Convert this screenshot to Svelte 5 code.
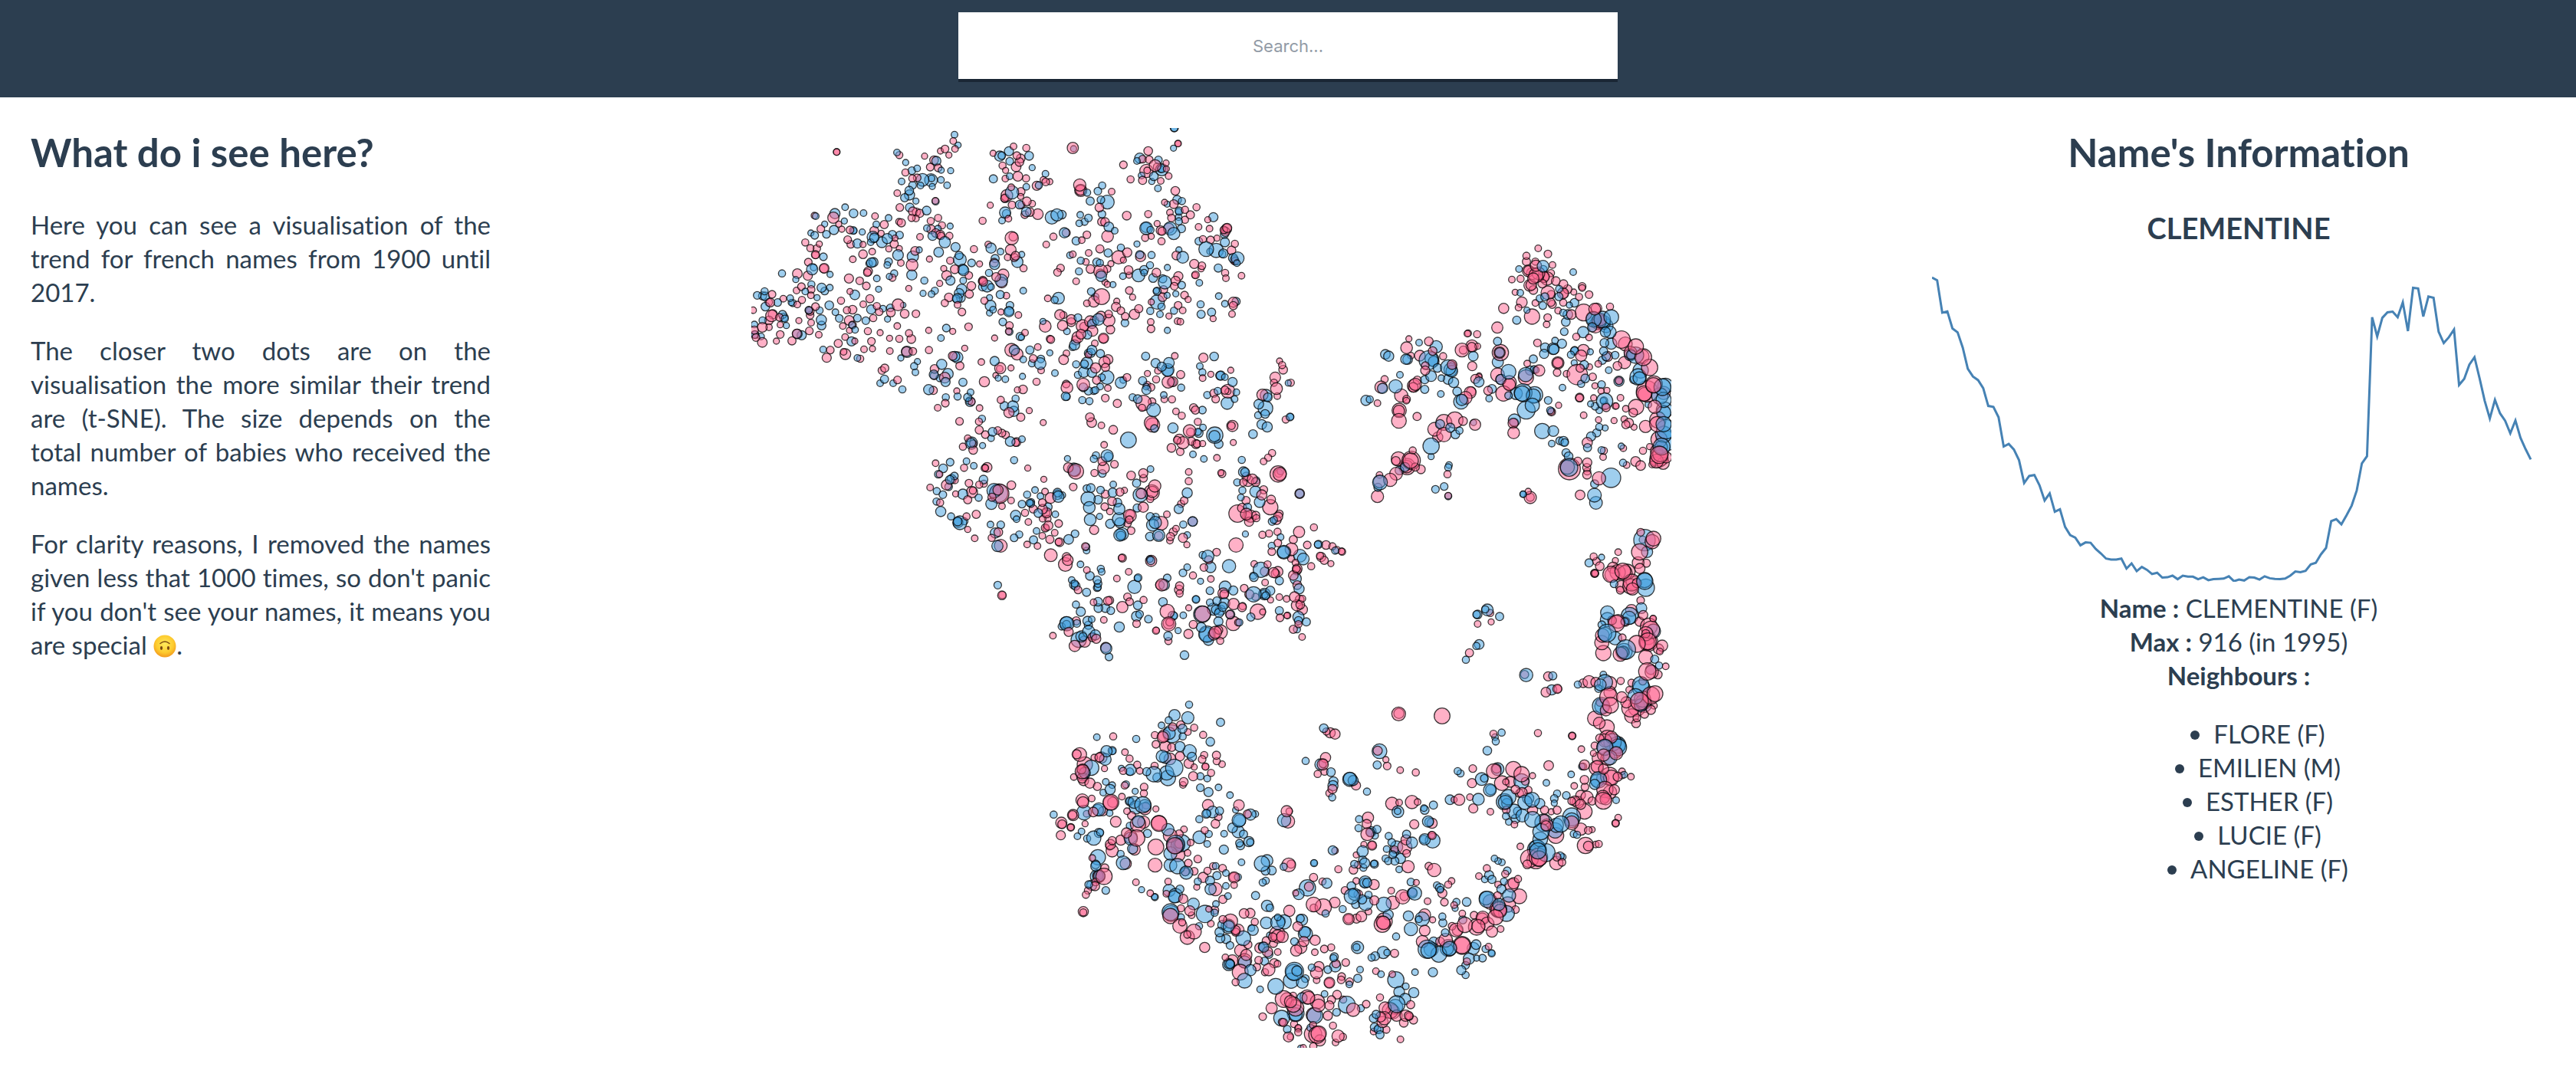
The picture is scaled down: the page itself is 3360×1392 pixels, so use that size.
<script>
  // Dots are stored per region of the map as flat "x y r" triples.
  // Each region has its own origin and its own units per map pixel.
  const regions = [
    {
      x: -20, y: -17, sx: 3, sy: 3,
      f: `394 145 13 394 145 13 850 102 13 857 133 13 818 133 15 800 141 12 833 157 12 738 161 12 639 157 14 775 177 17 760 204 15 791 207 15 663 225 14 690 248 14 709 246 15 631 306 13 641 362 15 780 336 13 692 377 17 706 380 16 719 385 16 687 403 14 704 405 13 647 422 16 638 418 13 580 429 16 544 396 13 762 415 14 791 403 14 806 432 14 764 448 17 720 477 13 799 469 18 802 473 14 835 473 14 782 462 17 541 453 17 568 463 12 598 524 12 619 505 16 622 482 12 639 523 12 645 579 13 701 532 17 689 587 23 497 545 17 533 535 13 457 565 13 517 612 17 514 617 15 381 402 22 402 427 12 414 447 12 446 450 15 437 488 15 449 506 15 497 507 12 332 446 15 307 394 13 271 499 14 291 521 14 316 523 15 326 505 12 311 547 16 311 548 14 283 576 15 345 600 19 344 601 17 240 621 19 281 629 18 256 672 15 237 687 13 294 683 15 293 706 13 185 719 13 258 724 14 240 742 13 141 702 15 128 733 15 134 734 17 67 764 13 139 786 23 144 780 18 129 804 17 103 831 19 129 831 13 170 792 15 173 821 12 173 859 15 158 885 12 72 842 16 75 860 15 78 871 15 103 890 19 219 884 16 238 856 18 246 805 12 285 764 15 290 768 16 290 784 15 311 750 15 294 813 13 287 845 15 324 860 13 442 640 18 484 649 15 510 669 15 446 691 12 411 727 14 498 741 13 524 719 16 456 762 17 434 764 14 443 804 19 456 822 15 418 826 13 537 795 14 560 770 15 551 748 14 516 846 14 564 852 12 427 869 13 444 843 12 465 885 12 530 886 15 534 915 12 501 917 13 400 894 16 369 920 15 355 950 18 421 927 13 428 936 21 486 954 14 602 924 13 601 874 12 639 876 14 677 854 14 686 877 17 631 826 13 634 743 23 606 773 17 660 778 17 704 778 15 676 679 12 754 843 12 755 920 14 848 847 12 910 829 15 884 771 15 867 743 13 817 736 14 833 714 17 797 659 12 757 564 12 813 601 12 824 628 19 838 570 14 856 604 17 911 628 15 921 669 17 913 701 16 931 525 14 965 414 14 995 353 12 953 583 12 612 637 14 667 926 19 692 925 15 848 943 17 876 982 16 895 913 12 960 967 13 972 1044 20 582 991 16 571 1000 15 632 1037 15 777 994 17 776 1020 16 817 1028 21 772 1078 16 864 1080 12 1086 123 13 1136 129 14 1006 150 12 1099 159 15 1114 170 17 1109 184 17 1096 203 19 1043 198 14 1055 217 12 1103 240 19 1054 249 13 1135 248 14 1077 283 13 1060 315 23 1053 326 17 1051 326 15 1115 300 16 1080 352 15 1138 338 17 1114 319 12 1117 352 14 1130 390 15 1066 406 13 1079 482 26 1085 476 17 1075 528 21 1094 551 17 1089 558 16 1063 557 13 1125 600 14 987 507 13 1010 578 17 966 647 16 968 653 17 963 651 15 1018 634 17 1046 625 22 1040 656 21 972 727 14 1058 707 13 1037 771 12 1105 783 13 1070 824 15 1067 847 13 1131 852 13 1012 873 12 1078 920 26 1100 936 23 1181 908 13 1163 953 15 1034 991 22 1032 993 13 1076 990 12 1016 1019 11 1176 1044 14 1101 1076 12 1123 1074 17 1036 1115 14`,
      m: `855 77 13 869 118 12 630 147 13 664 186 12 709 209 13 688 218 15 803 216 12 840 218 12 784 180 18 648 260 13 730 254 25 763 255 25 765 248 13 802 254 13 826 275 13 768 280 12 722 276 13 691 275 15 678 296 17 679 313 20 660 324 16 704 337 12 781 338 14 680 362 17 746 374 17 427 361 13 387 386 20 460 385 17 499 384 13 424 415 12 347 427 12 312 396 13 383 450 18 354 467 15 308 471 15 293 462 12 459 452 15 461 453 12 494 458 12 549 428 13 597 403 13 536 478 23 541 480 18 571 498 21 592 484 20 612 468 16 640 470 15 475 503 18 527 498 13 634 548 21 692 554 22 717 528 12 688 626 20 793 537 19 817 498 22 769 473 18 747 443 13 790 445 13 838 435 12 859 517 18 873 550 16 876 566 25 887 604 20 890 608 21 922 579 15 839 648 18 889 648 13 883 682 20 873 698 19 866 718 19 862 720 15 880 716 17 737 648 14 732 698 12 765 701 13 778 688 14 558 682 12 551 640 13 597 574 15 592 587 13 530 578 19 538 576 18 521 581 13 619 620 14 600 632 12 180 620 14 234 644 12 342 555 15 298 604 22 304 597 13 368 624 12 295 663 14 335 676 18 347 689 15 367 676 13 317 715 12 271 691 13 83 706 15 112 690 14 114 710 17 104 708 16 115 750 17 163 734 15 212 717 13 216 734 12 222 736 14 182 781 16 187 792 17 191 797 14 197 824 12 104 804 14 72 820 13 73 859 15 98 867 13 240 857 19 257 862 18 285 764 14 327 765 14 334 802 20 335 824 17 365 745 17 389 772 13 404 796 15 465 704 19 529 761 18 508 805 15 475 795 15 466 841 13 454 822 13 575 758 13 604 755 15 654 744 11 593 799 12 452 886 18 341 918 13 475 951 13 669 927 22 645 951 12 710 965 12 697 983 14 702 1007 13 581 1034 16 564 1050 13 615 1050 13 651 1074 14 802 873 13 823 834 15 856 945 20 866 949 22 805 976 20 774 1016 18 797 1030 14 829 1013 21 820 1045 18 754 1075 20 888 1046 16 918 1085 13 867 1102 14 821 1105 14 1068 142 18 1147 160 17 1032 161 20 1040 159 15 1071 181 15 1159 206 12 1071 240 13 1007 250 16 1136 281 13 1080 303 26 1110 351 17 1053 382 22 1058 386 16 1041 413 13 1136 379 19 998 521 20 1035 535 13 1118 546 12 1101 575 22 1014 562 16 1012 585 20 990 618 14 983 670 23 965 673 16 998 673 13 1038 648 25 1124 688 13 992 715 12 1034 703 16 996 746 21 1006 762 13 992 775 12 1072 745 15 1068 770 20 1069 768 17 1044 810 15 1070 848 14 1112 867 16 1117 870 12 1089 920 20 1124 957 13 1150 920 16 1012 963 18 1054 1034 13 1026 1030 12 1121 1023 12 1094 1110 14`
    },
    {
      x: 360, y: -17, sx: 3, sy: 3,
      f: `0 128 12 178 129 22 590 112 13 589 112 12 376 195 15 404 252 14 473 141 17 477 175 15 451 173 15 500 198 23 466 219 26 469 217 13 543 188 12 508 203 15 553 239 13 522 258 13 451 256 16 544 211 12 63 254 13 72 262 15 88 261 12 37 277 18 205 274 24 209 295 24 208 294 20 330 300 13 19 347 13 10 380 17 41 388 21 0 336 17 282 362 17 389 394 17 473 388 14 291 418 16 304 419 17 314 475 23 152 461 16 102 476 14 74 507 13 213 490 13 233 469 15 178 545 13 240 540 13 284 524 16 229 575 13 130 599 15 118 616 15 191 651 13 247 603 17 287 612 27 286 621 18 313 602 14 327 582 12 357 557 26 391 538 18 376 568 12 304 655 12 313 663 12 396 607 17 398 627 12 399 687 15 412 713 12 291 711 31 260 730 22 233 737 13 80 718 13 461 481 14 485 475 12 525 494 14 443 554 20 508 425 12 522 452 18 527 455 16 554 443 20 579 297 17 537 342 12 573 349 17 617 371 14 662 361 14 638 391 16 617 410 14 558 382 13 564 403 15 706 410 12 670 438 13 713 445 13 687 486 14 717 489 15 742 482 12 782 442 18 779 446 20 775 457 18 769 450 15 812 504 14 799 530 17 810 568 17 813 572 15 583 550 17 653 583 18 683 590 15 680 602 12 658 626 15 656 627 12 774 618 14 777 639 13 838 629 13 591 631 18 580 649 18 575 670 15 505 617 17 533 684 16 529 713 17 485 732 12 615 705 15 629 722 12 590 745 15 608 765 13 554 787 12 588 807 13 599 809 13 483 810 13 484 837 15 806 733 20 806 746 16 801 779 13 727 797 12 350 729 12 347 751 18 366 766 15 383 788 15 419 780 20 436 758 16 318 779 15 319 804 24 325 840 17 127 782 20 141 783 14 172 800 19 172 811 17 138 824 20 216 826 25 222 828 17 246 808 22 288 788 20 255 845 21 210 858 19 197 870 22 190 882 18 70 827 23 88 876 14 92 879 15 42 908 12 153 933 13 142 958 19 298 874 20 298 875 17 264 894 13 24 947 15 22 960 13 54 1000 13 36 1044 15 239 938 13 267 990 20 302 967 22 316 957 19 306 988 16 271 1038 16 219 1055 25 155 1067 23 152 1053 15 390 1027 15 577 943 13 600 1016 16 470 1012 12 504 1035 14 511 1001 13 551 1045 24 570 1044 19 469 1056 14 484 1066 15 689 950 18 796 999 12 718 1015 12 686 1030 13 536 1113 13 566 1113 14 352 1129 16 305 1108 15 315 1069 13 785 1081 27 773 1077 16 785 1082 12 730 1089 16 737 1112 15 987 963 12 997 979 14 1001 997 17 970 1027 21 975 1071 23 978 1100 13 1031 1048 14 965 1048 14 920 1095 22`,
      m: `575 50 16 575 51 14 181 132 12 572 130 12 0 160 20 18 206 12 71 230 13 45 275 14 0 282 12 440 169 20 429 180 13 513 176 15 526 214 24 526 210 16 522 212 13 495 240 17 447 237 13 487 260 12 511 287 13 293 276 14 276 298 15 234 304 14 313 341 27 288 332 15 246 337 16 292 388 15 586 332 17 605 337 14 547 349 12 594 376 16 592 378 12 592 400 13 593 416 14 465 443 25 464 440 20 482 450 14 559 444 26 573 464 24 603 445 16 486 548 14 440 547 16 429 505 12 593 528 12 608 557 23 728 400 18 671 494 15 773 498 18 771 467 16 700 525 29 739 530 28 714 534 12 767 542 18 763 544 14 823 561 25 805 560 18 820 580 13 747 599 16 548 597 12 673 657 13 604 666 15 538 655 26 530 641 16 492 638 17 457 606 17 480 588 14 457 617 13 435 628 25 374 631 13 508 690 16 505 688 12 508 732 28 481 767 14 519 780 13 547 706 12 581 700 12 525 750 14 574 766 14 548 843 12 749 709 13 678 741 14 680 780 16 721 772 16 773 739 13 817 730 16 96 401 26 116 391 24 135 390 17 145 461 20 191 493 16 207 391 13 203 424 13 224 418 14 239 403 15 319 438 19 342 453 13 316 540 16 366 519 14 167 549 13 209 570 14 272 576 16 284 579 14 289 631 21 202 612 14 335 664 12 250 691 15 266 711 14 122 717 23 107 724 14 61 808 12 155 847 13 198 793 15 253 818 18 278 800 23 262 806 18 235 860 17 185 900 20 177 908 14 382 814 15 88 931 12 11 920 16 53 955 15 50 973 23 18 972 14 253 920 19 248 931 18 286 934 16 239 932 16 233 971 23 223 975 16 191 976 14 221 1006 21 253 1008 19 291 1027 14 312 1027 27 198 1017 14 108 1010 13 366 1048 22 375 1037 13 285 1063 13 239 1080 16 219 1066 17 260 1080 14 266 1077 14 150 1101 17 154 1103 14 215 1116 14 243 1120 14 463 944 16 502 971 18 554 970 21 526 985 18 549 998 25 550 1002 21 451 1040 16 465 1063 13 466 1076 18 602 1067 14 565 1046 18 534 1096 13 412 1105 14 432 1112 17 731 945 17 675 983 13 685 1007 14 754 1020 17 757 1020 18 773 1026 13 803 1045 18 818 1085 13 704 1096 14 745 1080 14 811 1112 13 782 1128 24 685 1155 15 1021 1049 12 934 1097 23 941 1105 17`
    },
    {
      x: 200, y: 333, sx: 2.529, sy: 3,
      f: `97 27 17 173 32 13 134 78 15 109 96 13 221 72 14 247 97 13 316 66 15 373 27 12 391 25 17 411 107 12 383 133 16 344 115 20 457 154 12 181 149 15 245 150 14 246 183 16 266 201 15 307 185 15 321 195 15 333 202 15 369 230 17 366 232 15 208 215 13 192 248 14 226 261 17 226 236 14 611 133 17 617 154 19 649 165 13 688 182 17 662 59 15 701 79 17 671 17 12 536 17 21 591 12 20 813 155 27 818 163 28 788 77 30 783 96 14 816 72 15 883 63 13 857 62 13 813 17 15 895 110 13 914 127 14 953 96 16 959 105 16 1025 62 14 1064 28 25 1067 33 17 1020 35 14 967 151 14 940 187 25 943 191 16 906 219 20 899 223 15 918 233 24 880 253 17 909 268 15 946 227 16 961 238 18 964 237 15 983 236 12 1081 167 22 1078 166 15 1084 232 12 1030 292 13 1229 50 13 1226 21 22 1187 44 22 1257 142 14 1212 273 14 1199 291 14 1184 306 13 1232 355 32 1237 355 26 1234 352 16 1303 432 19 937 347 13 937 383 14 1043 350 12 1047 354 15 658 241 13 652 305 17 656 332 23 626 351 14 692 317 15 540 330 19 565 345 30 556 406 15 406 332 12 459 376 12 272 329 19 264 332 14 266 331 13 196 331 14 102 313 13 115 356 13 84 408 13 138 398 20 166 380 13 168 433 12 212 391 15 246 397 14 261 393 14 222 426 22 225 420 14 208 456 16 117 467 14 236 513 16 204 521 14 312 432 38 308 418 20 288 446 16 352 399 17 351 459 13 321 481 13 208 572 12 231 607 13 287 605 14 309 583 17 317 636 25 463 424 13 481 449 21 454 467 15 397 507 14 424 492 16 455 493 19 468 507 20 466 507 16 455 530 13 472 530 13 474 557 18 464 566 16 466 566 12 508 549 15 495 585 13 408 543 13 454 597 13 479 611 16 511 622 17 508 621 14 404 631 13 438 637 13 482 673 25 534 680 17 538 692 21 530 709 27 596 639 15 662 434 16 684 462 17 660 483 15 677 502 13 710 426 16 725 419 12 747 361 17 787 352 18 788 372 15 825 402 24 815 427 30 817 425 22 780 432 20 787 485 20 810 453 14 743 518 25 744 514 18 741 534 15 735 548 15 747 577 15 625 574 18 718 684 16 716 683 13 813 695 22 846 548 27 865 513 13 950 541 18 895 569 13 886 582 16 877 600 16 875 616 13 838 597 17 918 605 18 931 632 12 912 472 14 922 459 15 1093 633 28 1029 661 15 1003 691 16 987 721 15 951 752 14 1010 766 13 1127 365 17 1133 382 22 1147 375 20 1158 387 17 1117 388 15 1184 417 16 1178 437 20 1209 455 17 1206 485 30 1126 459 16 1098 510 34 1113 488 18 1127 512 23 1130 520 18 1141 520 24 1136 542 18 1158 517 16 1160 528 14 1236 511 15 1232 522 18 1227 535 18 1350 564 14 1301 582 22 1180 593 14 1202 588 14 1230 581 14 1282 612 16 1231 625 15 1211 659 15 1276 650 25 1328 633 15 1390 633 17 1411 638 14 1425 652 14 1443 659 14 1441 658 13 1374 680 18 1370 675 14 1384 693 16 1406 706 12 1341 716 14 1275 686 14 1289 702 13 1295 726 19 1292 726 15 1282 752 19 1294 733 17 1197 709 14 1153 707 13 1188 737 18 1231 737 20 1217 741 20 1223 745 17 1189 780 13 1295 790 17 1120 802 15 1137 826 18 1157 836 14 1085 864 22 1051 822 21 1054 826 17 1113 877 17 1115 872 14 1165 894 30 1181 895 12 1207 848 12 1236 837 13 1260 844 13 1286 836 20 1303 846 17 1312 843 13 1294 869 22 1312 886 20 1305 867 17 1238 918 15 1263 909 13 1261 909 12 1299 943 14 1282 963 16 1311 993 13 1073 905 16 1084 940 28 1100 936 14 1041 973 28 1025 975 24 1036 966 16 1041 1008 14 1020 983 22 983 903 31 936 981 18 952 944 16 937 879 12 907 793 16 905 808 18 907 823 14 848 789 24 842 790 17 739 738 13 700 764 13 735 836 15 742 855 15 788 848 14 718 876 22 676 850 16 670 852 17 623 857 13 765 941 15 657 926 13 866 893 28 871 942 28 871 940 22 874 935 15 829 968 14 830 967 12 870 1009 14 321 830 17 322 829 14 601 731 13 572 809 15 566 930 16 541 973 18 561 1028 22 594 1011 22 619 994 17 622 991 14 632 1000 18 663 1034 20 489 988 13`,
      m: `79 25 21 136 54 16 175 52 14 208 55 16 218 34 14 216 72 19 213 70 13 366 60 15 329 89 17 357 91 22 360 110 20 255 139 14 290 190 17 285 215 13 348 228 19 387 219 13 220 234 24 219 233 18 257 244 12 361 301 14 533 52 17 536 50 14 586 66 13 610 70 14 587 26 21 613 28 18 631 21 16 738 222 31 821 104 27 771 63 16 754 54 15 824 177 15 855 44 14 911 17 15 885 175 20 712 3 17 982 105 15 998 45 14 1095 38 15 1065 76 24 970 195 17 967 190 14 984 173 13 1023 203 32 1022 207 22 1036 238 17 951 278 13 987 296 13 1149 199 17 1178 161 19 1196 171 20 1190 98 29 1168 82 19 1190 48 17 1189 120 17 1166 125 14 1271 132 15 1273 131 13 1240 344 14 1303 432 17 1112 300 14 1118 347 20 1123 348 17 1097 388 14 1160 380 14 811 336 13 668 284 24 672 287 17 631 282 14 624 296 14 652 353 15 537 295 12 558 338 26 562 343 22 688 396 13 765 391 16 204 305 13 228 323 13 150 309 15 127 333 17 111 356 15 164 363 15 155 375 18 149 378 17 145 405 15 260 377 17 106 422 14 126 436 15 105 463 14 192 434 20 244 448 14 295 420 28 310 430 36 286 472 22 119 502 20 153 521 14 175 541 17 182 546 27 176 545 20 197 540 14 283 553 13 317 554 15 299 586 20 306 637 22 430 418 13 404 436 14 387 473 15 412 468 14 416 471 15 417 465 14 448 442 13 504 436 19 507 444 22 504 428 17 520 438 13 473 484 16 441 508 17 497 513 13 366 517 20 369 532 13 435 578 13 378 592 14 361 605 15 425 613 16 541 611 19 562 589 15 601 412 15 614 410 17 646 418 15 605 452 28 638 456 17 686 428 18 702 467 17 609 486 23 643 521 12 612 534 23 708 492 22 707 532 26 710 546 20 678 550 18 717 590 25 710 594 24 713 596 17 767 488 16 777 437 28 932 429 20 904 492 18 810 522 16 828 523 14 818 555 24 827 545 24 838 595 24 809 600 17 950 541 19 919 553 14 932 594 13 599 640 14 580 709 13 600 655 13 809 688 13 812 694 16 1070 716 26 1000 677 24 983 672 14 1009 720 21 932 720 13 918 742 15 976 775 12 1124 590 12 1171 465 21 1157 424 22 1114 419 14 1109 447 13 1131 485 16 1218 535 14 1212 541 15 1240 602 13 1251 661 27 1250 661 24 1211 636 14 1304 675 25 1315 688 23 1365 631 16 1363 631 14 1420 655 14 1290 765 22 1301 805 20 1175 730 30 1152 759 17 1150 753 14 1236 773 16 1206 812 18 1151 826 30 1187 825 23 1185 825 17 1191 831 15 1057 797 23 1084 811 18 1007 812 15 961 846 15 961 845 13 1030 852 16 1007 858 14 1055 861 21 1042 888 20 1049 875 18 1019 884 24 1027 886 18 981 904 33 1037 899 18 1074 905 18 1035 932 18 1104 936 14 1142 915 16 1236 890 16 1325 934 16 1299 915 22 1299 929 16 1294 963 14 997 982 32 996 983 28 978 955 19 1002 1006 20 919 908 13 902 968 12 884 910 18 889 910 14 866 762 15 856 789 21 852 856 17 770 761 15 768 763 13 758 797 26 769 869 17 765 912 20 775 904 15 804 923 15 708 954 20 635 770 16 647 726 14 650 738 13 611 754 17 638 784 15 637 798 14 635 800 15 551 770 13 558 788 17 564 793 17 561 784 14 600 818 16 638 855 17 639 880 17 662 880 17 680 890 15 565 866 14 581 894 18 533 938 25 535 941 28 518 952 14 534 944 16 568 940 15 603 930 18 617 924 13 606 947 16 607 972 24 574 1004 30 583 991 22 588 992 16 629 985 20 665 1038 22 674 1071 15 869 989 17 923 1064 17 307 790 15`
    },
    {
      x: 760, y: 133, sx: 3, sy: 3,
      f: `799 72 13 837 94 15 753 101 14 753 124 16 788 124 14 790 140 22 855 137 13 696 194 13 730 191 14 760 160 23 760 158 18 777 170 24 790 178 28 800 170 25 820 184 22 825 182 18 834 190 26 780 190 22 772 215 21 766 217 23 780 235 17 807 188 13 815 210 17 849 169 14 868 200 17 898 212 17 914 232 17 938 243 12 709 244 12 837 246 27 850 253 16 896 248 22 899 250 17 971 221 15 971 227 13 959 262 14 998 253 15 735 283 21 722 304 13 775 339 30 788 286 13 849 283 16 854 291 16 897 284 14 877 316 13 836 343 15 832 370 13 929 331 19 664 307 20 639 382 22 525 404 13 522 406 13 560 408 14 501 470 27 506 470 16 540 454 24 539 458 18 562 455 12 541 533 18 796 442 15 948 418 14 998 421 13 977 323 33 1020 310 23 1027 307 21 1035 360 30 1038 356 28 1042 350 25 1023 375 28 1080 300 14 1125 429 34 1140 446 27 1181 456 30 1160 480 25 1210 498 33 1206 495 27 1235 538 32 1137 519 24 1109 532 17 1070 495 20 976 471 23 967 492 22 1034 524 13 1000 536 12 952 566 40 963 541 16 1012 575 15 910 563 13 876 520 24 876 520 20 873 558 15 961 656 17 961 657 15 803 550 22 756 523 13 751 577 30 686 598 28 686 605 24 640 567 27 653 585 20 663 640 30 603 629 17 651 480 32 648 480 22 293 426 12 284 461 23 371 436 17 301 492 13 336 492 21 386 474 17 427 494 14 357 550 18 357 531 15 462 527 19 198 584 14 184 615 24 170 678 13 263 648 26 283 668 13 284 662 15 312 610 25 318 604 24 310 616 19 326 588 16 255 706 28 254 708 22 254 747 29 325 730 16 430 753 31 473 744 32 394 780 27 430 801 28 406 811 20 505 748 17 533 636 23 537 632 18 515 657 25 552 762 22 553 583 18 568 570 11 567 576 13 879 686 12 851 712 16 850 711 13 701 757 20 705 754 17 703 794 23 977 725 13 1016 657 12 1021 610 12 1045 630 12 1068 628 12 1065 695 16 1062 688 15 1121 657 13 1101 689 13 1104 689 12 1182 693 30 1171 715 17 1142 700 13 1035 743 12 1096 746 12 1136 741 13 1154 755 18 1142 762 16 1174 772 12 1219 769 24 1115 590 15 991 832 20 1056 864 14 1053 889 13 1132 854 13 1209 864 14 1235 848 12 1180 906 19 1200 922 19 1145 920 13 308 863 14 252 896 28 242 904 17 302 902 36 300 903 30 286 926 32 284 926 25 340 937 17 318 928 16 243 954 25 220 978 26 178 959 13 178 985 24 170 1043 24 444 956 14 447 1040 13 768 1047 24 768 1046 16 760 1023 12 921 935 43 913 928 28 954 905 16 991 910 18 989 930 16 991 945 14 990 958 17 1037 972 26 963 1037 19 1225 632 42 1213 640 30 1216 643 27 1252 604 33 1250 608 30 1290 638 26 1255 692 26 1267 743 32 1265 760 30 1272 820 32 1262 865 24 1273 880 34 1277 877 30 1270 895 34 1288 913 24 1262 905 27 1300 890 22 1255 905 17 1245 918 13 1280 895 28 1115 592 13`,
      m: `936 165 13 724 153 13 818 142 23 819 154 15 805 268 14 825 262 16 817 296 15 881 231 14 880 261 16 729 246 13 755 314 12 715 353 16 921 294 12 941 285 17 907 360 17 901 398 15 915 331 19 897 324 14 975 400 22 1085 341 29 1013 345 27 1016 350 30 1055 362 27 1065 375 27 1080 400 24 1062 400 20 1010 381 18 1050 350 32 1058 442 17 1085 445 22 1055 474 16 1100 490 15 1065 495 17 1050 510 16 941 474 16 1003 477 12 927 488 14 942 471 15 979 528 17 940 520 12 1075 549 13 640 436 16 641 517 22 545 494 19 648 480 19 683 555 29 653 585 20 618 622 17 607 660 13 683 648 15 713 640 24 740 637 35 736 640 30 785 645 32 780 650 28 776 686 28 752 705 35 838 667 15 846 706 14 706 744 24 858 465 23 860 467 20 826 460 18 822 485 18 865 433 13 892 445 18 780 505 16 767 550 18 783 546 15 790 548 13 750 566 28 894 617 13 967 602 14 983 581 17 1047 605 15 1059 670 32 1056 668 15 1004 681 12 1022 690 15 1038 706 13 1054 668 12 1115 592 20 1180 490 32 1160 488 24 1163 488 19 1200 550 30 1190 575 32 1195 580 25 1172 586 15 1285 615 33 1297 610 30 1275 650 32 1293 705 32 1290 665 30 1290 715 28 1300 780 38 1290 760 30 1300 825 40 1282 848 33 1290 800 32 1280 850 25 1230 683 13 1038 771 14 1061 775 12 1028 794 16 1006 808 18 992 852 16 1047 862 14 1124 846 12 1131 911 14 908 872 16 918 886 17 883 825 15 852 836 13 898 827 19 903 832 15 858 787 21 815 787 30 920 930 34 1084 970 38 1020 994 16 1019 1038 27 1025 1068 25 740 1034 13 740 1034 12 333 441 13 201 487 19 214 494 20 281 506 20 288 507 19 400 457 24 370 510 37 383 505 27 390 515 21 405 540 17 447 538 30 456 547 26 461 553 23 464 530 15 258 567 13 241 612 26 190 620 20 380 572 21 355 586 16 355 624 16 418 642 13 420 580 13 446 585 19 468 597 20 482 632 17 497 672 29 500 665 22 567 595 20 125 667 20 140 663 14 455 774 18 415 760 18 475 800 17 491 785 14 380 846 32 380 887 12 256 941 17 278 928 18 450 920 13 447 929 14 431 1004 15 397 1015 15 447 1042 14 180 988 29 172 1007 16 546 754 12`
    },
    {
      x: 900, y: 493, sx: 3, sy: 3,
      f: `692 181 13 681 214 12 596 198 14 607 217 15 620 236 17 600 264 15 601 264 13 600 264 16 780 103 15 830 128 29 825 140 28 788 132 14 776 180 32 770 222 23 777 245 20 802 224 16 664 268 32 668 270 28 672 242 22 690 260 30 710 255 31 718 262 29 728 258 30 745 300 33 750 302 27 740 315 30 748 325 24 765 302 18 705 315 23 700 330 15 780 370 15 744 409 23 790 427 18 776 453 18 829 441 13 828 441 12 812 472 33 820 485 34 800 500 28 808 530 33 810 532 37 806 535 28 765 540 33 800 500 16 810 515 28 864 547 22 850 560 20 855 570 13 692 452 27 685 460 32 668 448 17 708 516 15 720 453 18 630 507 27 628 535 28 634 576 30 700 580 28 712 572 24 800 592 28 806 648 34 847 660 17 823 650 26 878 628 13 788 686 15 744 692 14 735 720 13 702 685 14 706 748 21 836 735 31 820 742 34 787 756 32 790 768 30 775 765 35 765 790 33 740 792 34 745 822 28 724 769 22 820 798 18 795 815 16 832 782 13 765 830 15 762 851 17 658 695 28 660 730 24 655 748 35 662 780 31 644 800 22 604 690 19 578 688 24 555 694 17 620 769 15 601 832 29 618 850 23 648 866 29 650 910 32 640 918 26 665 905 24 684 968 26 682 965 22 620 909 16 640 945 30 652 988 28 635 975 24 614 988 24 600 938 14 595 968 12 606 1026 28 610 1020 24 560 1014 20 555 1020 14 635 1030 20 560 1072 17 562 1100 15 632 1065 24 665 1064 30 658 1058 35 690 1060 18 640 1110 32 660 1120 26 677 1111 20 634 1154 33 643 1148 22 641 1146 15 632 1140 27 590 1155 16 545 1132 19 570 1140 24 545 1168 20 523 1155 20 510 1155 15 560 1196 30 535 1160 23 707 1039 13 742 1060 13 707 1055 13 520 1096 13 548 952 13 512 900 15 512 900 13 692 1220 13 682 1242 15 682 1242 13 546 1265 24 575 1270 15 590 1267 12 510 1240 27 564 1329 32 575 1331 19 604 1325 13 616 1323 14 409 729 19 418 667 18 454 716 18 456 716 15 191 419 14 142 462 13 195 454 12 110 575 16 326 660 16 378 889 14 3 822 31 420 1016 19 204 892 14 123 1028 15 120 1085 18 125 1184 18 70 1150 22 50 1150 12 112 1140 13 192 1197 13 205 1038 29 216 1028 18 282 1030 30 314 1050 30 237 1085 29 270 1080 21 252 1080 12 328 1078 15 357 1056 12 290 1110 17 316 1122 20 306 1125 16 340 1112 15 357 1190 20 404 1190 16 430 1197 12 453 1191 16 403 1228 20 413 1250 25 410 1252 20 448 1290 31 286 1247 13 309 1333 13 254 1190 15 357 1342 12 345 1380 35 370 1385 35 380 1375 36 383 1380 30 336 1403 17 450 1398 26 452 1374 16 472 1395 15`,
      m: `627 201 12 578 223 16 795 134 42 805 180 22 676 305 15 796 295 32 800 320 34 795 290 30 783 400 21 650 418 27 650 445 28 737 430 33 735 438 26 718 453 15 648 498 35 640 502 27 680 518 26 722 562 38 715 570 32 710 572 22 628 465 15 830 490 28 835 600 16 852 625 14 820 640 20 634 660 13 534 699 14 622 700 23 640 690 30 615 715 15 780 700 32 783 715 34 760 745 30 790 775 34 780 780 25 625 783 34 628 784 28 690 935 32 685 938 34 670 925 34 640 945 32 692 945 33 660 985 28 615 1072 32 610 1075 26 600 1090 20 508 1051 13 550 1020 13 684 1152 13 715 1052 13 411 1084 13 453 1126 14 442 1145 15 442 1163 12 489 1133 15 510 1217 35 510 1230 29 468 1245 32 450 1250 28 180 407 23 172 405 14 142 425 17 138 425 15 228 433 16 148 542 19 137 548 14 96 602 14 332 662 26 436 665 16 432 720 20 236 887 14 210 905 13 213 922 14 180 958 17 64 1038 14 75 1047 14 158 1069 25 168 1066 15 190 1112 25 193 1111 20 145 1148 23 34 1150 19 220 1030 25 314 1078 30 262 1140 30 247 1158 32 250 1160 27 256 1165 20 327 1160 28 355 1150 29 385 1165 20 285 1195 28 298 1195 16 317 1212 25 253 1214 14 264 1237 13 290 1225 18 357 1227 31 400 1240 34 390 1275 32 445 1270 30 387 1305 29 374 1345 37 378 1350 32 410 1357 35 375 1340 32 465 1370 16 475 1374 13 518 1284 14 531 1287 14 340 1145 22`
    },
    {
      x: 380, y: 733, sx: 3, sy: 3,
      f: `276 182 14 322 244 13 340 269 14 370 293 14 380 317 13 242 308 12 439 177 14 443 213 15 593 148 14 628 176 14 540 137 16 568 165 13 470 185 22 475 180 24 480 222 22 505 225 16 509 145 16 537 260 18 438 297 14 498 270 23 572 288 19 593 302 12 632 255 14 624 272 15 637 300 14 637 301 13 680 256 16 681 279 14 702 291 13 659 325 14 589 338 18 552 360 17 549 372 13 133 252 18 145 253 27 230 265 22 222 264 18 202 265 13 165 292 30 157 312 22 152 312 17 155 320 28 155 345 20 160 355 20 185 365 20 214 378 16 122 341 13 315 317 14 321 374 14 397 380 15 396 405 14 310 418 13 192 425 13 155 432 25 158 440 22 267 440 31 265 442 28 274 440 20 443 466 12 119 490 22 117 490 17 73 520 22 76 526 17 71 569 18 110 538 15 110 538 13 166 524 12 198 478 19 236 475 18 286 516 21 172 485 13 330 475 13 348 492 16 400 465 24 405 452 14 395 518 24 373 525 30 368 580 32 344 575 26 328 560 20 306 588 20 455 523 31 455 521 29 443 615 31 440 686 27 499 570 27 534 564 16 553 546 13 517 610 32 525 598 20 535 602 18 579 598 13 272 590 16 265 605 20 272 630 24 262 612 15 360 625 22 325 680 22 243 697 16 240 730 32 220 730 24 215 725 20 205 768 18 207 752 15 177 785 14 169 802 14 194 658 13 159 868 20 159 871 14 365 753 13 421 796 13 491 750 13 567 638 13 530 645 27 570 678 15 607 662 15 558 712 16 593 710 15 628 734 20 645 708 14 667 690 14 704 698 15 603 772 12 676 780 26 749 734 22 748 733 18 749 764 13 705 820 16 550 818 18 541 855 14 484 798 13 500 885 30 537 924 28 546 910 14 576 865 20 583 882 13 592 946 29 566 968 28 566 958 14 658 915 13 673 862 16 650 858 12 634 1008 20 647 451 22 634 550 14 687 497 15 676 524 17 768 451 21 801 486 16 955 475 22 965 475 13 960 515 26 963 685 27 972 682 16 1144 173 20 1125 168 20 1110 163 14 1107 265 20 1096 292 22 1098 288 17 1076 329 14 1103 320 14 1134 388 18 1122 404 14 1226 374 18 1144 629 13 1157 702 14 1060 734 16 1042 770 18 1095 750 14 1060 840 29 1098 850 32 1061 853 15 1143 832 21 990 795 12 965 865 22 812 874 19 788 875 19 830 908 14 735 905 28 705 898 15 765 940 23 755 940 18 755 948 16 803 997 16 775 1020 24 797 1037 22 790 1060 28 715 1047 13 742 1060 23 773 1105 31 755 1144 14 845 1058 15 838 1085 15 870 1105 14 885 1095 24 906 1070 18 919 1072 13 920 1026 13 880 1025 20 850 1010 20 875 982 16 903 992 16 900 968 17 918 955 30 920 965 26 938 966 23 998 926 19 1066 980 20 992 1020 22 1010 1008 24 1022 985 20 1065 1027 13 1102 1014 15 1129 1008 14 1081 1083 20 1072 1107 24 1072 1136 13 1122 1146 21 1121 1147 18 1186 1067 15 1148 1072 16 1170 1122 15 1168 1135 15 1201 1142 15 943 1210 33 957 1212 27 970 1220 24 981 1232 30 896 1246 22 990 1245 32 980 1197 14 1035 1202 28 1040 1205 25 1075 1220 28 1080 1235 25 1060 1272 29 1116 1275 18 1122 1235 18 1130 1213 16 1152 1193 17 1176 1212 14 861 1279 15 937 1300 15 942 1302 16 984 1308 14 1000 1325 14 1000 1322 12 1000 1340 14 962 1358 20 969 1358 12 1058 1347 34 1074 1350 33 1080 1345 30 1085 1372 22 1058 1312 14 1136 1314 14 1156 1355 24 1175 1358 14 1146 1380 13 1059 1395 14 1020 1400 12 1215 1252 26 1197 897 22 1197 896 17 1228 895 18`,
      m: `573 58 14 516 99 22 568 109 24 696 127 16 493 119 14 465 139 13 506 172 35 495 170 24 547 152 18 548 182 14 656 203 17 366 192 14 212 185 13 537 222 20 575 240 26 584 262 18 468 260 24 480 265 23 617 338 14 644 347 13 515 305 34 485 325 28 490 345 30 435 330 30 449 343 18 407 320 16 343 313 22 341 320 15 308 307 12 250 240 22 272 238 16 273 240 13 245 272 23 190 305 30 165 325 22 157 330 26 247 360 13 272 373 13 264 390 20 237 402 13 326 370 14 362 397 12 617 383 15 649 400 18 688 382 13 733 412 13 43 488 14 162 480 29 220 468 26 216 470 22 262 482 13 340 436 17 340 436 14 358 440 24 365 460 26 392 450 32 400 453 24 375 515 24 341 532 14 410 562 16 152 554 13 136 573 13 174 582 14 200 580 28 220 560 18 225 558 14 345 582 26 352 622 20 305 642 14 315 677 27 216 655 30 207 683 17 208 690 20 212 730 26 222 728 22 180 762 15 192 765 20 247 785 15 387 782 12 439 811 14 438 810 12 490 547 24 545 600 33 520 605 36 520 610 30 528 608 26 500 640 26 613 577 25 650 564 14 644 603 13 500 686 25 527 690 30 562 715 26 558 710 18 640 485 17 665 478 23 692 474 16 613 506 14 643 483 16 710 563 13 709 625 18 768 510 27 770 512 24 743 540 19 765 555 24 813 488 22 832 486 13 755 470 12 786 565 16 770 600 15 774 610 16 807 594 20 812 596 14 778 675 13 858 680 30 878 668 23 872 708 17 897 707 17 861 754 14 873 747 14 833 805 16 878 845 22 889 853 15 677 689 13 682 727 16 717 717 13 655 747 18 607 750 14 657 780 22 717 767 13 764 733 14 725 807 13 678 838 13 635 877 34 673 872 14 612 925 14 495 785 24 515 810 24 520 805 28 537 780 16 590 838 23 500 870 33 502 875 31 541 890 14 1100 150 17 1029 278 14 1087 292 22 1128 322 17 1138 358 18 1136 375 20 1133 421 14 1202 350 28 1202 348 25 1215 355 20 945 510 26 1135 628 18 1062 678 14 1062 677 12 1036 775 32 1002 800 21 1112 757 20 1107 875 14 1174 858 14 943 692 14 726 925 28 728 925 22 703 920 18 692 948 18 695 972 18 718 975 18 733 1000 15 785 972 29 823 940 21 817 932 13 875 912 23 920 910 28 945 908 28 932 905 18 920 890 13 1015 900 22 1008 895 16 1028 955 28 1026 948 22 985 985 15 888 960 12 862 1005 18 865 1007 20 885 1035 16 868 1062 16 730 1073 20 728 1075 24 733 1073 17 813 1097 22 790 1065 24 790 1138 29 851 1172 13 985 1102 36 983 1105 31 995 1100 20 972 1138 30 1016 1145 23 1028 1130 15 912 1160 31 1053 1087 14 1141 1045 16 1138 1050 14 1145 1082 22 1116 1095 15 1200 1153 13 1103 1190 13 1150 1262 15 1015 1205 20 935 1285 31 990 1265 33 990 1270 26 1065 1275 31 957 1328 15 1048 1322 14 1190 1232 33 1232 1008 24 1228 1007 14 1010 1402 12`
    },
    {
      x: 660, y: 733, sx: 3, sy: 3,
      f: `553 94 27 554 92 20 725 102 30 503 273 12 508 298 15 559 314 13 620 323 14 471 238 18 527 445 25 555 441 13 605 439 26 627 439 13 614 526 18 684 522 20 682 568 14 684 570 16 433 500 22 428 525 18 430 565 25 449 609 18 449 608 15 417 605 12 387 646 12 376 704 17 394 685 14 582 587 20 577 615 28 584 640 15 537 625 14 590 692 24 671 690 15 692 705 26 760 748 13 747 762 14 724 796 18 732 831 15 666 827 13 770 842 13 622 754 12 607 792 17 524 786 13 575 808 17 569 810 28 530 833 26 458 824 18 457 762 20 387 748 13 343 785 15 395 800 17 435 868 13 407 887 21 388 898 18 357 897 22 357 895 17 496 905 32 489 917 32 493 912 26 655 880 23 686 900 12 655 942 21 646 985 24 737 980 27 715 985 17 801 1000 35 801 1000 32 783 942 20 778 940 27 762 925 15 812 920 30 858 928 32 865 925 26 882 892 26 880 895 22 848 882 15 802 875 13 900 915 26 918 946 22 952 936 13 932 890 30 945 860 30 943 858 33 950 865 26 912 830 29 940 805 15 980 840 30 1025 808 29 1010 860 15 1003 757 22 995 765 26 1020 740 14 942 762 13 898 698 14 867 729 13 970 720 14 1030 612 13 905 1005 13 820 1063 14 537 1031 16 464 1101 13 528 1113 13 480 1204 14 426 1230 15 600 1232 16 500 1245 24 520 1255 31 530 1260 28 497 1285 26 545 1275 22 580 1275 22 592 1275 17 595 1278 15 573 1303 17 611 1292 16 490 1300 22 505 1330 14 455 1337 13 560 1368 13 482 1280 20`,
      m: `478 240 29 469 294 16 429 398 14 550 477 23 549 475 13 652 463 13 655 470 17 689 451 16 668 515 22 672 517 17 686 590 29 655 585 22 652 585 16 514 572 14 526 597 15 506 623 13 584 565 16 605 598 22 545 615 24 535 635 18 530 645 15 560 660 20 538 670 16 512 670 14 502 660 14 555 703 13 398 506 14 396 541 14 468 546 16 445 555 20 442 558 17 460 570 14 412 632 22 412 665 16 420 678 20 415 696 14 380 682 15 458 682 16 457 680 13 422 752 24 420 755 18 430 755 18 368 768 17 370 808 30 380 800 24 375 795 17 424 835 28 410 820 18 435 802 14 385 840 16 495 840 29 512 880 20 335 858 14 601 752 15 616 796 27 606 795 20 703 765 14 714 775 17 716 782 13 779 830 14 819 830 17 774 855 12 591 885 20 601 936 26 645 897 28 632 898 13 724 887 14 726 912 16 735 950 15 543 965 14 493 1028 24 508 1028 13 461 1042 17 447 1048 14 484 1113 13 402 1095 13 393 1129 16 617 1105 13 687 1105 18 665 1015 36 670 1020 30 680 1015 28 710 1035 31 690 985 18 748 1010 33 752 1012 28 745 1015 22 845 1012 24 856 997 19 828 1052 22 858 1050 12 881 1050 15 815 1078 15 798 1097 18 815 1116 14 893 1014 14 917 1031 14 917 1030 12 804 900 16 895 815 27 900 820 32 945 840 24 975 875 31 985 805 26 955 780 18 965 750 14 918 742 16 907 725 18 890 742 13 928 660 13 942 670 13 957 675 13 978 708 15 542 1135 32 555 1182 21 581 1160 13 612 1185 20 578 1210 22 545 1230 33 540 1240 29 455 1285 17 465 1270 16 458 1320 16 475 1328 18 480 1350 16 470 1330 14 405 1246 14 355 1235 32`
    }
  ];

  function read(list, sex, region) {
    const n = list.trim().split(/\s+/).map(Number);
    const out = [];
    for (let i = 0; i + 2 < n.length; i += 3) {
      out.push({
        x: region.x + n[i] / region.sx,
        y: region.y + n[i + 1] / region.sy,
        r: n[i + 2] / 3,
        sex,
        region
      });
    }
    return out;
  }

  // Regions overlap at their edges, so a name may be listed by two of them.
  const same = (a, b) =>
    a.region !== b.region &&
    a.sex === b.sex &&
    Math.abs(a.r - b.r) < 2 &&
    Math.hypot(a.x - b.x, a.y - b.y) < 4;

  const mix = (d) => (d.x * 7.13 + d.y * 3.71) % 1;
  const dots = regions
    .flatMap((g) => [...read(g.f, 'girl', g), ...read(g.m, 'boy', g)])
    .filter((d, i, all) => !all.slice(0, i).some((o) => same(d, o)))
    .sort((a, b) => mix(a) - mix(b));

  // One reading per year, 1900 to 2017, measured down from the top of the chart.
  const firstYear = 1900;
  const trend = [
    0, 9, 109, 105, 158, 170, 217, 283, 307, 318, 343, 398, 401, 433, 524, 516, 533, 566, 637, 615,
    612, 644, 691, 669, 726, 718, 773, 798, 806, 830, 821, 822, 841, 855, 871, 874, 874, 871, 902, 886,
    910, 897, 906, 919, 915, 930, 929, 924, 935, 924, 927, 927, 935, 929, 938, 935, 934, 933, 926, 941,
    936, 939, 929, 930, 936, 926, 932, 934, 935, 933, 924, 911, 913, 909, 889, 884, 858, 838, 755, 749,
    765, 737, 707, 660, 576, 554, 123, 183, 125, 108, 106, 123, 77, 166, 32, 34, 121, 59, 63, 168,
    203, 185, 161, 333, 314, 270, 247, 312, 382, 437, 379, 421, 444, 483, 443, 497, 532, 564
  ];
  const line = trend
    .map((v, i) => `${((i * 781) / (trend.length - 1)).toFixed(1)},${(3 + v * 0.421).toFixed(1)}`)
    .join(' ');

  const person = { name: 'CLEMENTINE', sex: 'F', max: 916, year: firstYear + 95 };
  const neighbours = ['FLORE (F)', 'EMILIEN (M)', 'ESTHER (F)', 'LUCIE (F)', 'ANGELINE (F)'];
</script>

<header>
  <input type="text" placeholder="Search..." aria-label="Search a name" />
</header>

<main>
  <section class="about">
    <h2>What do i see here?</h2>
    <p>Here you can see a visualisation of the trend for french names from 1900 until 2017.</p>
    <p>
      The closer two dots are on the visualisation the more similar their trend are (t-SNE). The
      size depends on the total&nbsp;number of babies who received the names.
    </p>
    <p>
      For clarity reasons, I removed the names given less that 1000 times, so don't panic if you
      don't see your names, it means you are special
      <svg class="face" viewBox="0 0 30 30" role="img" aria-label="upside-down face"
        ><defs
          ><radialGradient id="skin" cx="50%" cy="40%" r="60%"
            ><stop offset="0" stop-color="#ffe95c" /><stop offset="0.65" stop-color="#fdcb2e" /><stop
              offset="1"
              stop-color="#f39a1d"
            /></radialGradient
          ></defs
        ><circle cx="15" cy="15" r="14.5" fill="url(#skin)" /><path
          d="M9 11.5Q15 6.5 21 11.5"
          fill="none"
          stroke="#7a4a12"
          stroke-width="1.5"
          stroke-linecap="round"
        /><ellipse cx="10.5" cy="17.5" rx="1.6" ry="2.4" fill="#7a4a12" /><ellipse
          cx="19.5"
          cy="17.5"
          rx="1.6"
          ry="2.4"
          fill="#7a4a12"
        /></svg
      >.
    </p>
  </section>

  <section class="map">
    <svg viewBox="0 0 1200 1200" role="img" aria-label="Map of names">
      {#each dots as d}
        <circle class={d.sex} cx={d.x} cy={d.y} r={d.r} />
      {/each}
    </svg>
  </section>

  <section class="info">
    <h2>Name's Information</h2>
    <h3>{person.name}</h3>
    <svg class="chart" viewBox="0 0 800 400" role="img" aria-label="Births per year">
      <polyline points={line} />
    </svg>
    <div><b>Name :</b> {person.name} ({person.sex})</div>
    <div><b>Max :</b> {person.max} (in {person.year})</div>
    <div><b>Neighbours :</b></div>
    <ul>
      {#each neighbours as n}
        <li>{n}</li>
      {/each}
    </ul>
  </section>
</main>

<style>
  :global(body) {
    margin: 0;
    background: #fff;
    color: #2c3e50;
    font: 33px/44px Lato, 'Open Sans', sans-serif;
    font-variant-ligatures: none;
  }
  header {
    display: flex;
    justify-content: center;
    padding: 16px 20px 20px;
    background: #2c3e50;
  }
  input {
    box-sizing: border-box;
    width: 860px;
    max-width: 100%;
    height: 91px;
    padding: 0 30px;
    border: 0;
    border-bottom: 4px solid #1a2634;
    border-radius: 0;
    background: #fff;
    color: #2c3e50;
    font: 22px Inter, sans-serif;
    text-align: center;
    outline: 0;
    appearance: none;
  }
  input::placeholder {
    color: #929ba6;
    opacity: 1;
  }
  main {
    display: grid;
    grid-template-columns: 680px minmax(0, 1fr) 880px;
  }
  section {
    box-sizing: border-box;
    padding: 40px;
  }
  h2 {
    margin: 0 0 40px;
    font-size: 51px;
    line-height: 64px;
    font-weight: 700;
  }
  h3 {
    margin: 0 0 36px;
    font-size: 38px;
    line-height: 52px;
    font-weight: 700;
  }
  p {
    margin: 0 0 32px;
    text-align: justify;
  }
  .face {
    width: 30px;
    height: 30px;
    vertical-align: -4px;
  }
  .map svg {
    display: block;
    width: 100%;
    max-width: 1200px;
    margin: 0 auto;
    overflow: hidden;
  }
  circle.girl,
  circle.boy {
    fill-opacity: 0.5;
    stroke: #000;
    stroke-opacity: 0.75;
    stroke-width: 1.3;
  }
  circle.girl {
    fill: #ff638f;
  }
  circle.boy {
    fill: #3f9ddd;
  }
  .info {
    text-align: center;
  }
  .chart {
    display: block;
    width: 100%;
    margin-bottom: 12px;
  }
  polyline {
    fill: none;
    stroke: steelblue;
    stroke-width: 3;
  }
  ul {
    margin: 32px 0;
    padding: 0 0 0 80px;
    list-style: none;
  }
  li::before {
    content: '';
    display: inline-block;
    width: 12px;
    height: 12px;
    margin: 0 18px 0 -30px;
    border-radius: 50%;
    background: currentColor;
    vertical-align: 5px;
  }
</style>
